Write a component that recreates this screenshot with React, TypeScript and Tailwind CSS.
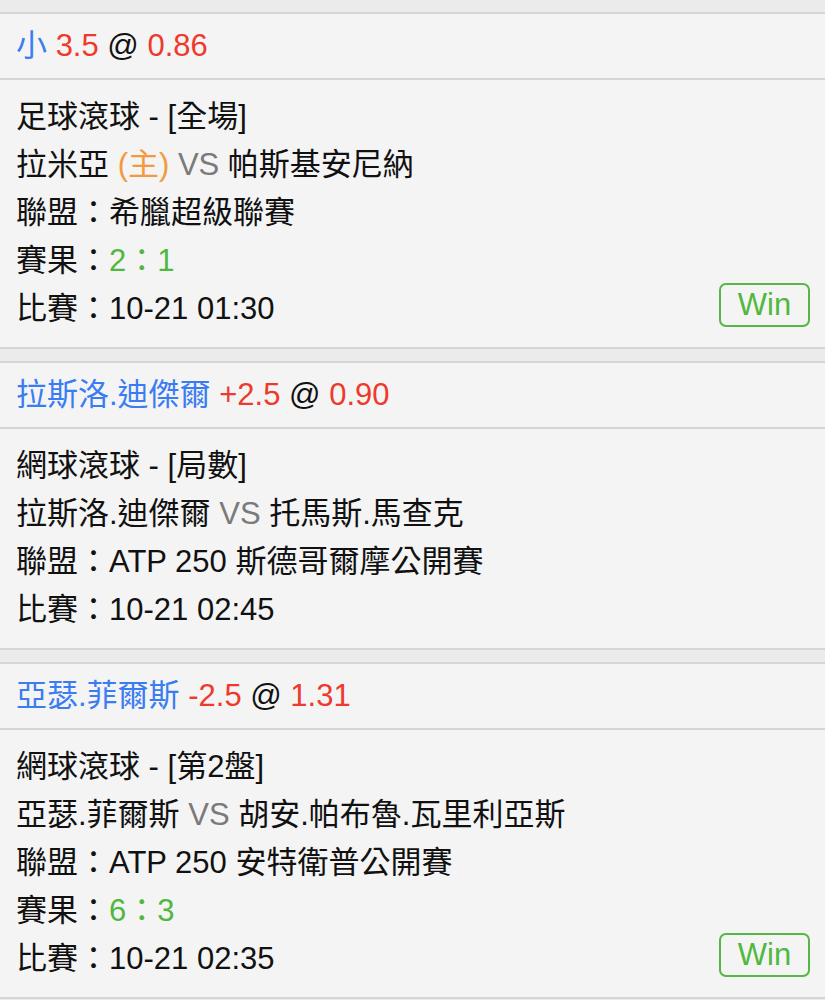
import React from "react";

type Seg = { t: string; c?: string };

interface Bet {
  title: Seg[];
  lines: Seg[][];
  win?: boolean;
}

const BLUE = "text-[#3a7cf2]";
const RED = "text-[#ee3a2c]";
const GREEN = "text-[#4fb83d]";
const ORANGE = "text-[#f39a40]";
const GRAY = "text-[#7a7a7a]";

const bets: Bet[] = [
  {
    title: [
      { t: "小 ", c: BLUE },
      { t: "3.5 ", c: RED },
      { t: "@ " },
      { t: "0.86", c: RED },
    ],
    lines: [
      [{ t: "足球滾球 - [全場]" }],
      [{ t: "拉米亞 " }, { t: "(主) ", c: ORANGE }, { t: "VS ", c: GRAY }, { t: "帕斯基安尼納" }],
      [{ t: "聯盟：希臘超級聯賽" }],
      [{ t: "賽果：" }, { t: "2：1", c: GREEN }],
      [{ t: "比賽：10-21 01:30" }],
    ],
    win: true,
  },
  {
    title: [
      { t: "拉斯洛.迪傑爾 ", c: BLUE },
      { t: "+2.5 ", c: RED },
      { t: "@ " },
      { t: "0.90", c: RED },
    ],
    lines: [
      [{ t: "網球滾球 - [局數]" }],
      [{ t: "拉斯洛.迪傑爾 " }, { t: "VS ", c: GRAY }, { t: "托馬斯.馬查克" }],
      [{ t: "聯盟：ATP 250 斯德哥爾摩公開賽" }],
      [{ t: "比賽：10-21 02:45" }],
    ],
  },
  {
    title: [
      { t: "亞瑟.菲爾斯 ", c: BLUE },
      { t: "-2.5 ", c: RED },
      { t: "@ " },
      { t: "1.31", c: RED },
    ],
    lines: [
      [{ t: "網球滾球 - [第2盤]" }],
      [{ t: "亞瑟.菲爾斯 " }, { t: "VS ", c: GRAY }, { t: "胡安.帕布魯.瓦里利亞斯" }],
      [{ t: "聯盟：ATP 250 安特衛普公開賽" }],
      [{ t: "賽果：" }, { t: "6：3", c: GREEN }],
      [{ t: "比賽：10-21 02:35" }],
    ],
    win: true,
  },
];

const Segs = ({ segs }: { segs: Seg[] }) => (
  <span className="whitespace-pre">
    {segs.map((s, i) => (
      <span key={i} className={s.c}>
        {s.t}
      </span>
    ))}
  </span>
);

const BetCard = ({ bet }: { bet: Bet }) => (
  <div className="bg-[#f4f4f4] border-y-2 border-[#d5d5d5]">
    <div className="h-[66px] flex items-center px-4 border-b-2 border-[#d5d5d5]">
      <Segs segs={bet.title} />
    </div>
    <div className="pt-[13px] pb-[14px] pl-4 pr-[15px]">
      {bet.lines.map((line, i) => {
        const last = i === bet.lines.length - 1;
        return (
          <div key={i} className="h-[48px] flex items-center justify-between">
            <Segs segs={line} />
            {last && bet.win && (
              <div className="self-start -mt-[2px] w-[91px] h-[44px] flex items-center justify-center border-2 border-[#55b845] rounded-[7px] text-[#4fb83d]">
                Win
              </div>
            )}
          </div>
        );
      })}
    </div>
  </div>
);

export default function App() {
  return (
    <div
      className="min-h-[1000px] bg-[#ebebeb] pt-[12px] flex flex-col gap-[12px] text-[31px] leading-[48px] text-[#111]"
      style={{ fontFamily: '"Liberation Sans", "Noto Sans CJK TC", sans-serif' }}
    >
      {bets.map((b, i) => (
        <BetCard key={i} bet={b} />
      ))}
    </div>
  );
}
